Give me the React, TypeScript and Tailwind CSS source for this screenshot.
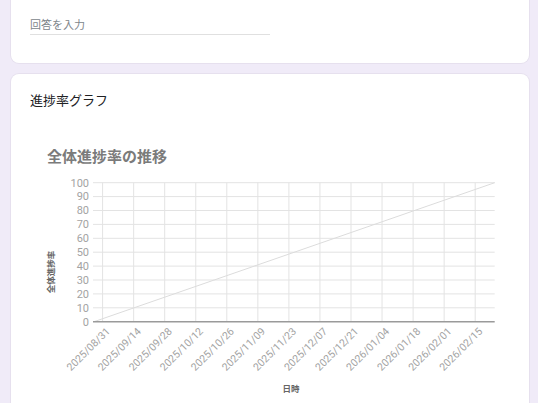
import React from "react";

const OX = 11;
const OY = 130;
const px = (x: number) => x - OX;
const py = (y: number) => y - OY;

const dates = [
  "2025/08/31",
  "2025/09/14",
  "2025/09/28",
  "2025/10/12",
  "2025/10/26",
  "2025/11/09",
  "2025/11/23",
  "2025/12/07",
  "2025/12/21",
  "2026/01/04",
  "2026/01/18",
  "2026/02/01",
  "2026/02/15",
];

const LEFT = 93;
const RIGHT = 494.7;
const TOP = 182.7;
const BOTTOM = 321.7;
const STEP = (BOTTOM - TOP) / 10;
const yOf = (v: number) => BOTTOM - (v / 10) * STEP;

function Chart() {
  const ys = Array.from({ length: 11 }, (_, i) => i * 10);
  return (
    <svg width={518} height={273} className="block font-['Roboto','Noto_Sans_CJK_JP',sans-serif]">
      <text x={px(47)} y={py(161.5)} fontSize={15} fontWeight={700} fill="#7b7b7b" className="font-['Noto_Sans_CJK_JP',sans-serif]">
        全体進捗率の推移
      </text>
      {ys.slice(1).map((v) => (
        <line key={"h" + v} x1={px(LEFT)} x2={px(RIGHT)} y1={py(yOf(v))} y2={py(yOf(v))} stroke="#e3e3e3" strokeWidth={1} />
      ))}
      {dates.map((d, j) => {
        const x = 102.6 + j * 31.05;
        return <line key={"v" + d} x1={px(x)} x2={px(x)} y1={py(TOP)} y2={py(BOTTOM)} stroke="#e3e3e3" strokeWidth={1} />;
      })}
      <line x1={px(94)} y1={py(BOTTOM)} x2={px(RIGHT)} y2={py(TOP)} stroke="#dcdcdc" strokeWidth={1} />
      <line x1={px(LEFT)} x2={px(RIGHT)} y1={py(BOTTOM)} y2={py(BOTTOM)} stroke="#9a9a9a" strokeWidth={1.5} />
      {ys.map((v) => (
        <text key={"yl" + v} x={px(89)} y={py(yOf(v) + 3.8)} fontSize={11} fill="#a3a3a3" textAnchor="end">
          {v}
        </text>
      ))}
      {dates.map((d, j) => {
        const x = 102.6 + j * 31.05 + 8;
        const y = 332;
        return (
          <text
            key={"xl" + d}
            x={px(x)}
            y={py(y)}
            fontSize={10.5}
            fill="#a3a3a3"
            textAnchor="end"
            transform={`rotate(-45 ${px(x)} ${py(y)})`}
          >
            {d}
          </text>
        );
      })}
      <text
        x={px(54)}
        y={py(272)}
        fontSize={8.5}
        fontWeight={700}
        fill="#666"
        textAnchor="middle"
        transform={`rotate(-90 ${px(54)} ${py(272)})`}
        className="font-['Noto_Sans_CJK_JP',sans-serif]"
      >
        全体進捗率
      </text>
      <text x={px(291)} y={py(392)} fontSize={8.5} fontWeight={700} fill="#666" textAnchor="middle" className="font-['Noto_Sans_CJK_JP',sans-serif]">
        日時
      </text>
    </svg>
  );
}

export default function App() {
  return (
    <div className="h-[403px] overflow-hidden bg-[#f0ebf8] pl-[11px] pr-[9px] flex flex-col gap-[11px] font-['Roboto','Noto_Sans_CJK_JP',sans-serif]">
      <div className="h-[63px] shrink-0 bg-white rounded-b-lg shadow-[0_0_0_1px_#e6e0ee] pl-[19px] pt-[18px]">
        <div className="w-[240px] border-b border-[#e0e0e0] h-[17px] text-[11px] leading-[16px] text-[#80868b]">回答を入力</div>
      </div>
      <div className="flex-1 bg-white rounded-t-lg shadow-[0_0_0_1px_#e6e0ee] flex flex-col">
        <div className="pl-[19px] pt-[17px] h-[37px] text-[13px] leading-[20px] text-[#202124]">進捗率グラフ</div>
        <div className="mt-[19px]">
          <Chart />
        </div>
      </div>
    </div>
  );
}
